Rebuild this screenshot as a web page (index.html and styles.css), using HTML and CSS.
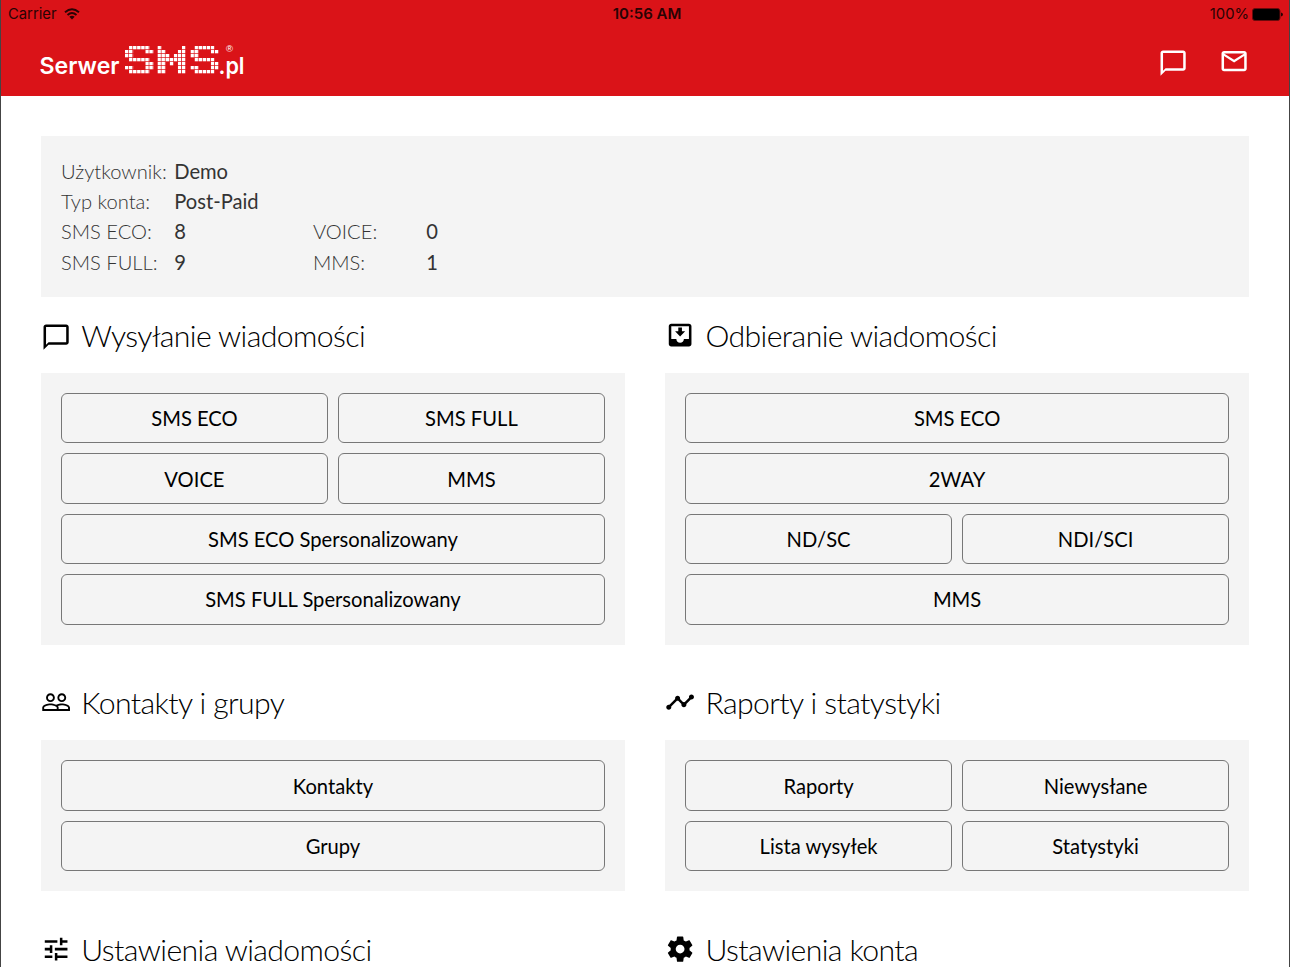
FILE: index.html
```html
<!DOCTYPE html>
<html lang="pl"><head><meta charset="utf-8"><title>SerwerSMS.pl</title><link rel="stylesheet" href="styles.css"></head>
<body>
<div class="app">
<header class="header">
  <div class="status">
    <span class="status-left">Carrier
      <svg class="wifi" viewBox="0 0 16 12"><g fill="none" stroke="#280304" stroke-width="1.9"><path d="M1 4.3Q8-1.7 15 4.3"/><path d="M3.5 7Q8 3 12.500 7"/></g><path fill="#280304" d="M5.300 8.800Q8 6.600 10.700 8.800L8 11.600Z"/></svg>
    </span>
    <span class="clock">10:56 AM</span>
    <span class="status-right">100%
      <svg class="battery" viewBox="0 0 31 13"><rect x=".5" y=".5" width="27.500" height="12" rx="2.500" fill="#000" stroke="#6b090b"/><path d="M29 4.500q2 .5 2 2t-2 2z" fill="#280304"/></svg>
    </span>
  </div>
  <div class="bar">
    <svg class="logo" viewBox="0 0 210 40">
      <defs><pattern id="dots" width="4.070" height="4" patternUnits="userSpaceOnUse"><rect width="3.400" height="3.300" fill="#fff"/></pattern></defs>
      <text class="logo-word" x="-.5" y="33.500" textLength="80" lengthAdjust="spacingAndGlyphs">Serwer</text>
      <g transform="translate(85 6)"><path fill="url(#dots)" d="M4.070 0H24.420V4H28.490V8H20.350V4H8.140V12H24.420V16H28.490V24H24.420V28H4.070V24H0V20H8.140V24H20.350V16H4.070V12H0V4H4.070Z"/></g>
      <g transform="translate(117.500 6)"><path fill="url(#dots)" d="M0 0H4.070V4H8.140V8H12.210V12H16.280V8H20.350V4H24.420V0H28.490V28H20.350V16H16.280V20H12.210V16H8.140V28H0Z"/></g>
      <g transform="translate(150.500 6)"><path fill="url(#dots)" d="M4.070 0H24.420V4H28.490V8H20.350V4H8.140V12H24.420V16H28.490V24H24.420V28H4.070V24H0V20H8.140V24H20.350V16H4.070V12H0V4H4.070Z"/></g>
      <text class="logo-word" x="178.500" y="33.500" textLength="26" lengthAdjust="spacingAndGlyphs">.pl</text>
      <text class="logo-reg" x="186" y="11.500">®</text>
    </svg>
    <nav class="actions">
      <svg class="icon" viewBox="0 0 24 24"><path d="M20 2H4c-1.100 0-2 .9-2 2v18l4-4h14c1.100 0 2-.9 2-2V4c0-1.100-.9-2-2-2zm0 14H6l-2 2V4h16v12z"/></svg>
      <svg class="icon" viewBox="0 0 24 24"><path d="M20 4H4c-1.100 0-2 .9-2 2v12c0 1.100.9 2 2 2h16c1.100 0 2-.9 2-2V6c0-1.100-.9-2-2-2zm0 14H4V8l8 5 8-5v10zm-8-7L4 6h16l-8 5z"/></svg>
    </nav>
  </div>
</header>
<main class="content">
  <dl class="account">
    <dt>Użytkownik:</dt><dd class="wide">Demo</dd>
    <dt>Typ konta:</dt><dd class="wide">Post-Paid</dd>
    <dt>SMS ECO:</dt><dd>8</dd><dt>VOICE:</dt><dd>0</dd>
    <dt>SMS FULL:</dt><dd>9</dd><dt>MMS:</dt><dd>1</dd>
  </dl>
  <div class="sections">
    <section class="section">
      <h2 class="title"><svg class="icon chat" viewBox="0 0 24 24"><path d="M20 2H4c-1.100 0-2 .9-2 2v18l4-4h14c1.100 0 2-.9 2-2V4c0-1.100-.9-2-2-2zm0 14H6l-2 2V4h16v12z"/></svg><span>Wysyłanie wiadomości</span></h2>
      <div class="panel"><button class="btn">SMS ECO</button><button class="btn">SMS FULL</button><button class="btn">VOICE</button><button class="btn">MMS</button><button class="btn full">SMS ECO Spersonalizowany</button><button class="btn full">SMS FULL Spersonalizowany</button></div>
    </section>
    <section class="section">
      <h2 class="title"><svg class="icon" viewBox="0 0 24 24"><path d="M16 9h-2.550V6h-2.900v3H8l4 4zm3-6H4.990C3.880 3 3 3.900 3 5v14c0 1.100.88 2 1.990 2H19c1.100 0 2-.9 2-2V5c0-1.100-.9-2-2-2zm0 12h-4c0 1.660-1.350 3-3 3s-3-1.340-3-3H4.990V5H19v10z"/></svg><span>Odbieranie wiadomości</span></h2>
      <div class="panel"><button class="btn full">SMS ECO</button><button class="btn full">2WAY</button><button class="btn">ND/SC</button><button class="btn">NDI/SCI</button><button class="btn full">MMS</button></div>
    </section>
    <section class="section">
      <h2 class="title"><svg class="icon" viewBox="0 0 24 24"><path d="M16.500 13c-1.200 0-3.070.34-4.500 1-1.430-.67-3.300-1-4.500-1C5.330 13 1 14.080 1 16.250V19h22v-2.750c0-2.170-4.330-3.250-6.500-3.250zm-4 4.500h-10v-1.250c0-.54 2.560-1.750 5-1.750s5 1.210 5 1.750v1.250zm9 0H14v-1.250c0-.46-.2-.86-.52-1.220.88-.3 1.960-.53 3.020-.53 2.440 0 5 1.210 5 1.750v1.250zM7.500 12c1.930 0 3.500-1.570 3.500-3.500S9.430 5 7.500 5 4 6.570 4 8.500 5.570 12 7.500 12zm0-5.500c1.100 0 2 .9 2 2s-.9 2-2 2-2-.9-2-2 .9-2 2-2zm9 5.500c1.930 0 3.500-1.570 3.500-3.500S18.430 5 16.500 5 13 6.570 13 8.500s1.570 3.500 3.500 3.500zm0-5.500c1.100 0 2 .9 2 2s-.9 2-2 2-2-.9-2-2 .9-2 2-2z"/></svg><span>Kontakty i grupy</span></h2>
      <div class="panel"><button class="btn full">Kontakty</button><button class="btn full">Grupy</button></div>
    </section>
    <section class="section">
      <h2 class="title"><svg class="icon" viewBox="0 0 24 24"><path d="M23 8c0 1.100-.9 2-2 2-.18 0-.35-.02-.51-.07l-3.560 3.550c.05.16.07.34.07.52 0 1.100-.9 2-2 2s-2-.9-2-2c0-.18.02-.36.07-.52l-2.550-2.550c-.16.05-.34.07-.52.07s-.36-.02-.52-.07l-4.550 4.560c.05.16.07.33.07.51 0 1.100-.9 2-2 2s-2-.9-2-2 .9-2 2-2c.18 0 .35.02.51.07l4.560-4.550C8.020 9.360 8 9.180 8 9c0-1.100.9-2 2-2s2 .9 2 2c0 .18-.02.36-.07.52l2.550 2.550c.16-.05.34-.07.52-.07s.36.02.52.07l3.550-3.560C19.020 8.350 19 8.180 19 8c0-1.100.9-2 2-2s2 .9 2 2z"/></svg><span>Raporty i statystyki</span></h2>
      <div class="panel"><button class="btn">Raporty</button><button class="btn">Niewysłane</button><button class="btn">Lista wysyłek</button><button class="btn">Statystyki</button></div>
    </section>
    <section class="section">
      <h2 class="title"><svg class="icon" viewBox="0 0 24 24"><path d="M3 17v2h6v-2H3zM3 5v2h10V5H3zm10 16v-2h8v-2h-8v-2h-2v6h2zM7 9v2H3v2h4v2h2V9H7zm14 4v-2H11v2h10zm-6-4h2V7h4V5h-4V3h-2v6z"/></svg><span>Ustawienia wiadomości</span></h2>
    </section>
    <section class="section">
      <h2 class="title"><svg class="icon" viewBox="0 0 24 24"><path d="M19.430 12.980c.04-.32.07-.64.07-.98s-.03-.66-.07-.98l2.110-1.650c.19-.15.24-.42.12-.64l-2-3.460c-.12-.22-.39-.3-.61-.22l-2.490 1c-.52-.4-1.080-.73-1.690-.98l-.38-2.650C14.460 2.180 14.250 2 14 2h-4c-.25 0-.46.18-.49.42l-.38 2.650c-.61.25-1.170.59-1.690.98l-2.490-1c-.23-.09-.49 0-.61.22l-2 3.460c-.13.22-.07.49.12.64l2.110 1.650c-.04.32-.07.65-.07.98s.03.66.07.98l-2.110 1.650c-.19.15-.24.42-.12.64l2 3.460c.12.22.39.3.61.22l2.490-1c.52.4 1.080.73 1.690.98l.38 2.650c.03.24.24.42.49.42h4c.25 0 .46-.18.49-.42l.38-2.650c.61-.25 1.170-.59 1.690-.98l2.490 1c.23.09.49 0 .61-.22l2-3.460c.12-.22.07-.49-.12-.64l-2.110-1.650zM12 15.500c-1.930 0-3.500-1.570-3.500-3.500s1.570-3.500 3.500-3.500 3.500 1.570 3.500 3.500-1.570 3.500-3.500 3.500z"/></svg><span>Ustawienia konta</span></h2>
    </section>
  </div>
</main>
</div>
</body></html>
```
FILE: styles.css
```css
* { box-sizing: border-box; }
body { margin: 0; background: #fff; font-family: Lato, sans-serif; color: #000; }
.app { height: 967px; overflow: hidden; border-left: 1px solid #444; border-right: 1px solid #444; }
.header { height: 96px; background: #da1318; }
.status { height: 27px; padding: 0 6px 0 7px; display: grid; grid-template-columns: 1fr auto 1fr; align-items: center; font: 14.8px/28px Inter, sans-serif; color: #280304; }
.status-left, .status-right { display: flex; align-items: center; gap: 7px; }
.status-right { justify-content: flex-end; gap: 3px; }
.clock { font-weight: 600; font-size: 15px; padding-left: 3px; }
.wifi { width: 16px; height: 12px; }
.battery { width: 31px; height: 13px; }
.bar { height: 69px; padding: 0 40px 0 39px; display: flex; align-items: flex-start; justify-content: space-between; }
.logo { width: 210px; height: 40px; margin-top: 13px; }
.logo-word { font: 600 23px Inter, sans-serif; fill: #fff; }
.logo-reg { font: 400 9.5px "Liberation Sans", sans-serif; fill: #fff; }
.actions { display: flex; gap: 30.2px; padding-top: 18.5px; }
.icon { width: 30.24px; height: 30.24px; flex: none; fill: currentColor; }
.actions .icon { color: #fff; }
.actions .icon:first-child { margin-top: 2.5px; }
.content { padding: 40px 40px 0; }
.account { margin: 0; height: 161px; padding: 20px; background: #f4f4f4; display: grid; grid-template-columns: 113.2px 138.8px 113.2px 1fr; grid-auto-rows: 30.2px; line-height: 30.2px; font-size: 20.16px; color: #333; align-content: start; }
.account dt { font-weight: 300; }
.account dd { margin: 0; }
.account .wide { grid-column: 2 / -1; }
.sections { display: grid; grid-template-columns: 1fr 1fr; column-gap: 40.3px; }
.section { height: 367.4px; }
.section:nth-child(n+3) { height: 247px; }
.title { margin: 0; height: 76px; display: flex; align-items: center; gap: 10px; font-weight: 300; font-size: 30.24px; letter-spacing: -.61px; white-space: nowrap; }
.title .chat { margin-top: 4px; }
.panel { padding: 20px; background: #f4f4f4; display: grid; grid-template-columns: 1fr 1fr; grid-auto-rows: 50.35px; gap: 10.08px; }
.btn { margin: 0; padding: 0; border: 1px solid #777; border-radius: 6px; background: transparent; font: 400 20.16px Lato, sans-serif; color: #000; }
.btn.full { grid-column: 1 / -1; }
```
